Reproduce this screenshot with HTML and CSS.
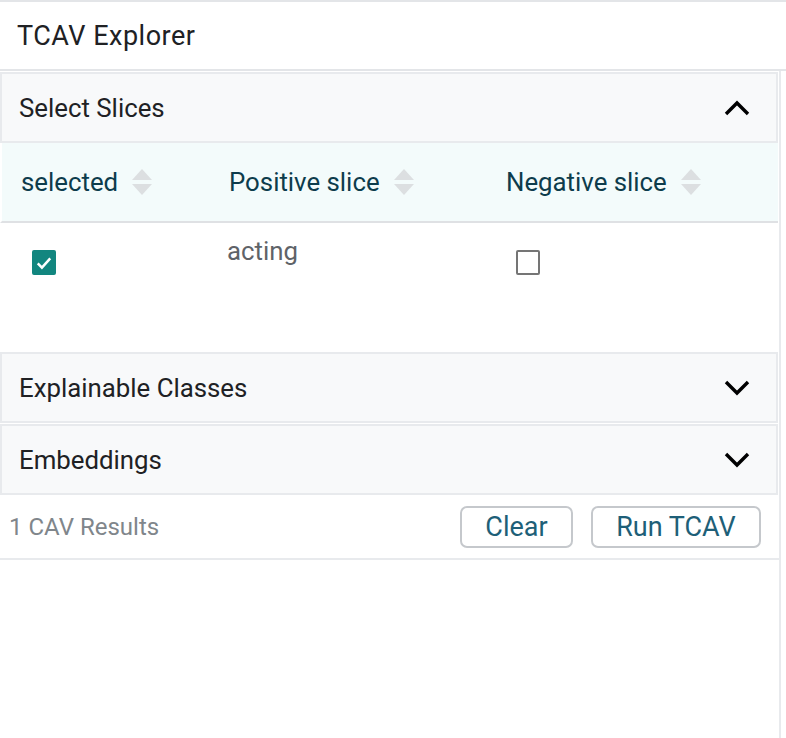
FILE: index.html
```html
<!DOCTYPE html>
<html>
<head>
<meta charset="utf-8">
<link rel="stylesheet" href="styles.css">
</head>
<body>
<div class="module">
  <div class="module-title">TCAV Explorer</div>
  <div class="module-body">
    <div class="panel">
      <div class="panel-head">
        <span class="panel-label">Select Slices</span>
        <svg class="chev" viewBox="0 0 26 16" width="26" height="16"><polyline points="2,14 13,3 24,14" fill="none" stroke="#000" stroke-width="3.4"/></svg>
      </div>
    </div>
    <div class="table">
      <div class="thead">
        <div class="th c1">selected<span class="sort"><i class="up"></i><i class="down"></i></span></div>
        <div class="th c2">Positive slice<span class="sort"><i class="up"></i><i class="down"></i></span></div>
        <div class="th c3">Negative slice<span class="sort"><i class="up"></i><i class="down"></i></span></div>
      </div>
      <div class="trow">
        <div class="td c1"><span class="cb checked"><svg viewBox="0 0 24 24" width="22" height="22"><polyline points="4.5,12.5 9.5,17.5 19.5,6.5" fill="none" stroke="#fff" stroke-width="3"/></svg></span></div>
        <div class="td c2 txt">acting</div>
        <div class="td c3"><span class="cb"></span></div>
      </div>
    </div>
    <div class="panel">
      <div class="panel-head">
        <span class="panel-label">Explainable Classes</span>
        <svg class="chev" viewBox="0 0 26 16" width="26" height="16"><polyline points="2,2 13,13 24,2" fill="none" stroke="#000" stroke-width="3.4"/></svg>
      </div>
    </div>
    <div class="panel">
      <div class="panel-head">
        <span class="panel-label">Embeddings</span>
        <svg class="chev" viewBox="0 0 26 16" width="26" height="16"><polyline points="2,2 13,13 24,2" fill="none" stroke="#000" stroke-width="3.4"/></svg>
      </div>
    </div>
    <div class="footer">
      <span class="results">1 CAV Results</span>
      <div class="buttons">
        <button class="btn clear">Clear</button>
        <button class="btn run">Run TCAV</button>
      </div>
    </div>
  </div>
</div>
</body>
</html>
```
FILE: styles.css
```css
html, body {
  margin: 0;
  padding: 0;
  background: #fff;
}
body {
  font-family: Roboto, "Noto Sans", sans-serif;
  width: 786px;
  height: 738px;
  overflow: hidden;
}
.module {
  display: flex;
  flex-direction: column;
  height: 738px;
}
.module-title {
  height: 67px;
  border-top: 2px solid #e3e5e8;
  border-bottom: 2px solid #e3e5e8;
  display: flex;
  align-items: center;
  padding-left: 17px;
  font-size: 27px;
  color: #202124;
  letter-spacing: 0.5px;
}
.module-body {
  width: 779px;
  flex: 1;
  border-right: 2px solid #e8eaed;
  display: flex;
  flex-direction: column;
}
.panel {
  border: 2px solid #e8eaed;
  background: #f8f9fa;
  margin-top: 1px;
  margin-right: 1px;
}
.panel-head {
  height: 67px;
  display: flex;
  align-items: center;
  justify-content: space-between;
  padding: 0 26px 0 17px;
}
.panel-label {
  font-size: 25.8px;
  color: #202124;
}
.chev {
  display: block;
}
.table {
  margin-right: 1px;
}
.thead {
  display: flex;
  height: 78px;
  background: #f3fbfb;
  border-bottom: 2px solid #dfe1e4;
  border-left: 2px solid #fff;
}
.th {
  display: flex;
  align-items: center;
  font-size: 25.8px;
  color: #0d3c4c;
}
.c1 { width: 227px; padding-left: 19px; box-sizing: border-box; }
.c2 { width: 277px; }
.c3 { flex: 1; }
.sort {
  display: inline-flex;
  flex-direction: column;
  gap: 4px;
  margin-left: 14px;
}
.sort i {
  display: block;
  width: 0;
  height: 0;
  border-left: 10px solid transparent;
  border-right: 10px solid transparent;
}
.sort .up { border-bottom: 11px solid #dcdfe1; }
.sort .down { border-top: 11px solid #dcdfe1; }
.trow {
  display: flex;
  height: 128px;
  padding-left: 2px;
}
.td {
  padding-top: 27px;
  box-sizing: border-box;
}
.td.c1 { padding-left: 30px; width: 225px; }
.td.c3 { padding-left: 12px; }
.txt {
  padding-top: 13px;
  font-size: 25.8px;
  color: #5f6368;
}
.cb {
  display: flex;
  align-items: center;
  justify-content: center;
  width: 24px;
  height: 25px;
  box-sizing: border-box;
  border: 2.5px solid #757575;
  border-radius: 2px;
}
.cb.checked {
  background: #12867f;
  border-color: #12867f;
}
.footer {
  height: 62px;
  margin-top: 1px;
  border-bottom: 2px solid #e8eaed;
  display: flex;
  align-items: center;
  justify-content: space-between;
  padding: 0 18px 0 9px;
}
.results {
  font-size: 24px;
  color: #80868b;
}
.buttons {
  display: flex;
  gap: 18px;
}
.btn {
  font-family: Roboto, "Noto Sans", sans-serif;
  font-size: 27px;
  color: #1e5f78;
  background: #fff;
  border: 2px solid #c5c8cc;
  border-radius: 7px;
  height: 42px;
  padding: 0;
}
.btn.clear { width: 113px; }
.btn.run { width: 170px; }
```
